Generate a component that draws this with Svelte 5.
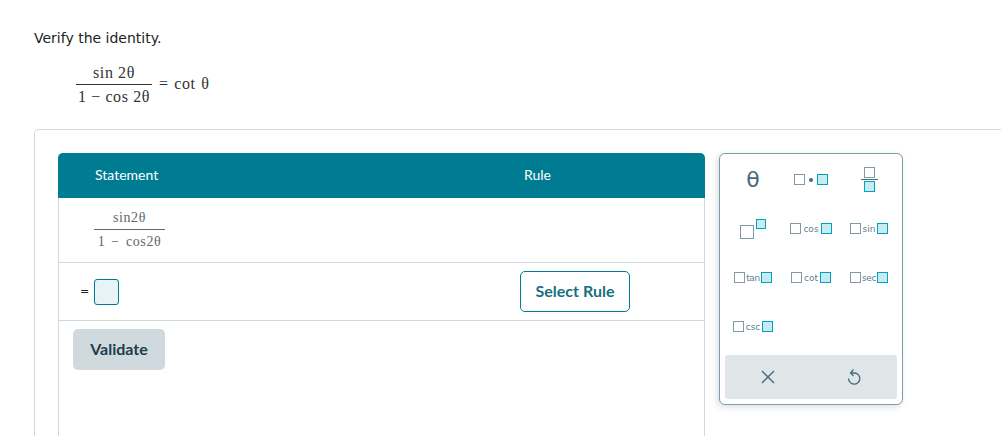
<script>
  const keys = [
    { type: "theta" },
    { type: "dot" },
    { type: "frac" },
    { type: "sup" },
    { type: "fn", label: "cos" },
    { type: "fn", label: "sin" },
    { type: "fn", label: "tan", tight: true },
    { type: "fn", label: "cot" },
    { type: "fn", label: "sec", tight: true },
    { type: "fn", label: "csc" }
  ]
</script>

<div class="page">
  <p class="prompt">Verify the identity.</p>

  <div class="identity">
    <span class="frac">
      <span class="num">sin 2θ</span>
      <span class="den">1 − cos 2θ</span>
    </span>
    <span class="rhs">= cot θ</span>
  </div>

  <div class="card">
    <div class="workspace">
      <div class="table">
        <div class="head">
          <span class="col-statement">Statement</span>
          <span class="col-rule">Rule</span>
        </div>
        <div class="row first">
          <span class="frac small">
            <span class="num">sin2θ</span>
            <span class="den">1 − cos2θ</span>
          </span>
        </div>
        <div class="row second">
          <span class="equals">=</span>
          <span class="answer"></span>
          <button class="select">Select Rule</button>
        </div>
        <div class="actions">
          <button class="validate">Validate</button>
        </div>
      </div>

      <div class="keypad">
        <div class="keys">
          {#each keys as key}
            <div class="key" class:tight={key.tight}>
              {#if key.type == "theta"}
                <span class="theta">θ</span>
              {:else if key.type == "dot"}
                <span class="box grey"></span><span class="dot"></span><span class="box blue"></span>
              {:else if key.type == "frac"}
                <span class="stack">
                  <span class="box grey"></span>
                  <span class="bar"></span>
                  <span class="box blue"></span>
                </span>
              {:else if key.type == "sup"}
                <span class="box grey big"></span><span class="box blue raised"></span>
              {:else}
                <span class="box grey"></span><span class="fn">{key.label}</span><span class="box blue"></span>
              {/if}
            </div>
          {/each}
        </div>
        <div class="footer">
          <svg width="16" height="16" viewBox="0 0 16 16" fill="none" stroke="#47697a" stroke-width="1.4">
            <path d="M2 2 L14 14 M14 2 L2 14" />
          </svg>
          <svg width="16" height="18" viewBox="0 0 16 18" fill="none" stroke="#47697a" stroke-width="1.3">
            <path d="M5 5 H9 A5.6 5.6 0 1 1 2.6 10.500" />
            <path d="M7.500 1.500 L4.500 5 L7.500 8" />
          </svg>
        </div>
      </div>
    </div>
  </div>
</div>

<style>
  :global(body) {
    margin: 0;
    background: #fff;
  }

  .page {
    height: 436px;
    width: 1001px;
    overflow: hidden;
    box-sizing: border-box;
    padding: 30px 0 0 34px;
    font-family: Lato, sans-serif;
    color: #1d3c4c;
  }

  .prompt {
    margin: 0;
    font-family: "DejaVu Sans", sans-serif;
    font-size: 14px;
    line-height: 16px;
    color: #222;
  }

  .identity {
    display: flex;
    align-items: center;
    margin: 17px 0 0 42px;
    font-family: "Liberation Serif", serif;
    font-size: 16px;
    color: #333;
  }

  .frac {
    display: inline-flex;
    flex-direction: column;
    align-items: center;
    width: 76px;
    line-height: 20px;
    letter-spacing: 0.6px;
  }

  .num {
    width: 100%;
    text-align: center;
    border-bottom: 1px solid #333;
    padding-bottom: 1px;
  }

  .den {
    white-space: nowrap;
    padding-top: 2px;
  }

  .rhs {
    margin: -2px 0 0 7px;
    letter-spacing: 0.6px;
    word-spacing: 1px;
  }

  .card {
    margin-top: 22px;
    height: 320px;
    border: 1px solid #d0dade;
    border-right: none;
    border-radius: 5px 0 0 0;
    padding: 23px 0 0 23px;
  }

  .workspace {
    display: flex;
    align-items: flex-start;
    gap: 14px;
  }

  .table {
    width: 645px;
    height: 300px;
    border: 1px solid #d0dade;
    border-top: none;
    border-radius: 5px 5px 0 0;
    flex: none;
  }

  .head {
    display: flex;
    align-items: center;
    height: 45px;
    margin: 0 -1px;
    padding-bottom: 3px;
    box-sizing: border-box;
    background: #007c92;
    border-radius: 5px 5px 0 0;
    color: #fff;
    font-size: 14px;
  }

  .col-statement {
    margin-left: 37px;
    width: 429px;
  }

  .row {
    display: flex;
    align-items: center;
    border-bottom: 1px solid #d0dade;
  }

  .row.first {
    height: 64px;
    padding-left: 35px;
  }

  .frac.small {
    width: 71px;
    font-family: "Liberation Serif", serif;
    font-size: 14px;
    color: #666;
    line-height: 20px;
    word-spacing: 2px;
  }

  .frac.small .num {
    border-bottom-color: #666;
  }

  .row.second {
    height: 57px;
    padding-left: 21px;
  }

  .equals {
    font-family: "DejaVu Sans", sans-serif;
    font-size: 11px;
    color: #222;
    width: 14px;
  }

  .answer {
    width: 23px;
    height: 24px;
    background: #e6f4f8;
    border: 1px solid #007c92;
    border-radius: 3px;
  }

  .select {
    margin-left: 401px;
    width: 110px;
    height: 41px;
    background: #fff;
    border: 1px solid #007c92;
    border-radius: 5px;
    color: #17707f;
    font-family: Lato, sans-serif;
    font-weight: 700;
    font-size: 16px;
    padding: 0 0 2px;
  }

  .actions {
    padding: 8px 14px;
  }

  .validate {
    width: 92px;
    height: 41px;
    background: #d0dade;
    border: none;
    border-radius: 5px;
    color: #1d3c4c;
    font-family: Lato, sans-serif;
    font-weight: 700;
    font-size: 16px;
    padding: 0 0 2px;
  }

  .keypad {
    width: 182px;
    height: 250px;
    flex: none;
    background: #fff;
    border: 1px solid #7f9ba5;
    border-radius: 6px;
    box-shadow: -2px 2px 6px rgba(0, 40, 60, 0.15);
    display: flex;
    flex-direction: column;
  }

  .keys {
    display: grid;
    grid-template-columns: repeat(3, 1fr);
    grid-auto-rows: 49px;
    height: 201px;
    padding: 0 4px;
    box-sizing: border-box;
    flex: none;
  }

  .key {
    display: flex;
    align-items: center;
    justify-content: center;
    gap: 2px;
    color: #47697a;
    padding-top: 2px;
  }

  .key.tight {
    gap: 1px;
  }

  .key.tight .fn {
    letter-spacing: -0.4px;
  }

  .theta {
    font-family: "DejaVu Sans", sans-serif;
    font-size: 22px;
    color: #47697a;
  }

  .box {
    box-sizing: border-box;
    display: block;
    width: 11px;
    height: 11px;
    flex: none;
  }

  .box.grey {
    background: #fff;
    border: 1.5px solid #7f9ba5;
  }

  .box.blue {
    background: #c6ecf2;
    border: 1.5px solid #00a3bd;
  }

  .box.big {
    width: 14px;
    height: 14px;
    margin-top: 6px;
  }

  .box.raised {
    width: 10px;
    height: 10px;
    margin: -10px 0 0 0;
  }

  .dot {
    width: 4px;
    height: 4px;
    border-radius: 50%;
    background: #47697a;
    margin: 0 2px;
  }

  .stack {
    display: flex;
    flex-direction: column;
    align-items: center;
    gap: 1px;
  }

  .bar {
    width: 17px;
    height: 1px;
    background: #47697a;
  }

  .fn {
    font-family: "DejaVu Sans", sans-serif;
    font-size: 9px;
    color: #5f7f8c;
  }

  .footer {
    margin: 0 5px;
    height: 44px;
    background: #e0e6e8;
    border-radius: 3px;
    display: flex;
    align-items: center;
    justify-content: space-between;
    padding: 0 35px;
  }
</style>
